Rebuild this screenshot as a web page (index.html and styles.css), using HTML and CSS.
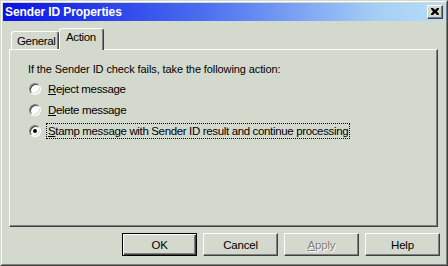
FILE: index.html
```html
<!DOCTYPE html>
<html>
<head>
<meta charset="utf-8">
<link rel="stylesheet" href="styles.css">
</head>
<body>
<div class="window">
  <div class="frame">
    <div class="titlebar">
      <span class="title">Sender ID Properties</span>
      <span class="close">
        <svg width="8" height="7" viewBox="0 0 8 7"><path d="M0 0h2l2 2 2-2h2v1l-2 2.5 2 2.5v1h-2l-2-2-2 2h-2v-1l2-2.5-2-2.5z" fill="#000"/></svg>
      </span>
    </div>
    <div class="body">
      <div class="tabs">
        <div class="tab">General</div>
        <div class="tab active">Action</div>
      </div>
      <div class="panel">
        <div class="prompt">If the Sender ID check fails, take the following action:</div>
        <div class="options">
          <div class="option"><span class="radio"></span><span class="label"><u>R</u>eject message</span></div>
          <div class="option"><span class="radio"></span><span class="label"><u>D</u>elete message</span></div>
          <div class="option"><span class="radio checked"></span><span class="label focus"><u>S</u>tamp message with Sender ID result and continue processing</span></div>
        </div>
      </div>
      <div class="buttons">
        <div class="btn default"><span>OK</span></div>
        <div class="btn"><span>Cancel</span></div>
        <div class="btn disabled"><span><u>A</u>pply</span></div>
        <div class="btn"><span>Help</span></div>
      </div>
    </div>
  </div>
</div>
</body>
</html>
```
FILE: styles.css
```css
* { box-sizing: border-box; }
html, body { margin: 0; padding: 0; background: #d4d9cd; }
body { font-family: "Liberation Sans", Arial, sans-serif; font-size: 11px; color: #000; }

.window {
  width: 448px;
  height: 266px;
  border: 1px solid;
  border-color: #d4d9cd #404040 #404040 #d4d9cd;
  background: #d4d9cd;
}
.frame {
  height: 100%;
  border: 1px solid;
  border-color: #ffffff #808080 #808080 #ffffff;
  padding: 1px;
  display: flex;
  flex-direction: column;
}
.titlebar {
  height: 18px;
  background: linear-gradient(to right, #0a12e4 0%, #4a6ef0 45%, #a6cff6 85%, #b8dcf8 100%);
  display: flex;
  align-items: center;
  justify-content: space-between;
  padding: 0 2px 0 2px;
}
.title {
  color: #fff;
  font-weight: bold;
  font-size: 12px;
  font-family: "Liberation Sans", Arial, sans-serif;
  letter-spacing: -0.1px;
}
.close {
  width: 16px;
  height: 14px;
  background: #d4d9cd;
  border: 1px solid;
  border-color: #fff #404040 #404040 #fff;
  box-shadow: inset -1px -1px #808080;
  display: flex;
  align-items: center;
  justify-content: center;
  padding-bottom: 1px;
}
.body {
  flex: 1;
  padding: 8px 5px 0 6px;
}
.tabs {
  display: flex;
  align-items: flex-end;
  height: 20px;
  padding-left: 2px;
  position: relative;
  z-index: 1;
}
.tab {
  height: 18px;
  border: 1px solid;
  border-bottom: none;
  border-color: #fff #404040 transparent #fff;
  border-radius: 3px 3px 0 0;
  box-shadow: inset -1px 0 #808080;
  background: #d4d9cd;
  font-size: 11.5px;
  letter-spacing: -0.35px;
  white-space: nowrap;
}
.tab:first-child { width: 48px; padding-left: 5px; line-height: 19px; }
.tab.active {
  height: 22px;
  margin-bottom: -1px;
  width: 45px;
  padding-left: 6px;
  line-height: 17px;
}
.panel {
  width: 429px;
  height: 178px;
  border: 1px solid;
  border-color: #fff #404040 #404040 #fff;
  box-shadow: inset -1px -1px #808080;
  padding: 13px 0 0 18px;
}
.prompt { line-height: 13px; font-size: 11px; letter-spacing: -0.1px; }
.options { margin-top: 5px; display: flex; flex-direction: column; gap: 5px; margin-left: 1px; }
.option { display: flex; align-items: center; height: 16px; }
.radio {
  width: 12px; height: 12px;
  border-radius: 50%;
  border: 1px solid;
  border-color: #808080 #ffffff #ffffff #808080;
  background: #fff;
  box-shadow: inset 1px 1px #404040, inset -1px -1px #d4d9cd;
  position: relative;
  flex: none;
}
.radio.checked::after {
  content: "";
  position: absolute;
  left: 3px; top: 3px;
  width: 4px; height: 4px;
  border-radius: 50%;
  background: #000;
}
.label { margin-left: 5px; padding: 1px 1px; border: 1px solid transparent; font-size: 11.5px; letter-spacing: -0.35px; line-height: 12px; }
.label.focus { border: 1px dotted #000; }
.buttons {
  display: flex;
  justify-content: flex-end;
  gap: 6px;
  margin-top: 6px;
}
.btn {
  width: 75px;
  height: 23px;
  border: 1px solid;
  border-color: #fff #404040 #404040 #fff;
  box-shadow: inset -1px -1px #808080;
  display: flex;
  align-items: center;
  justify-content: center;
  font-size: 11.5px;
  letter-spacing: -0.2px;
  padding-top: 1px;
}
.btn.default {
  border: 1px solid #000;
  box-shadow: inset 1px 1px #fff, inset -1px -1px #404040, inset -2px -2px #808080;
}
.btn.disabled span { color: #808080; text-shadow: 1px 1px #fff; }
.btn.disabled u { text-decoration-color: #808080; }
```
